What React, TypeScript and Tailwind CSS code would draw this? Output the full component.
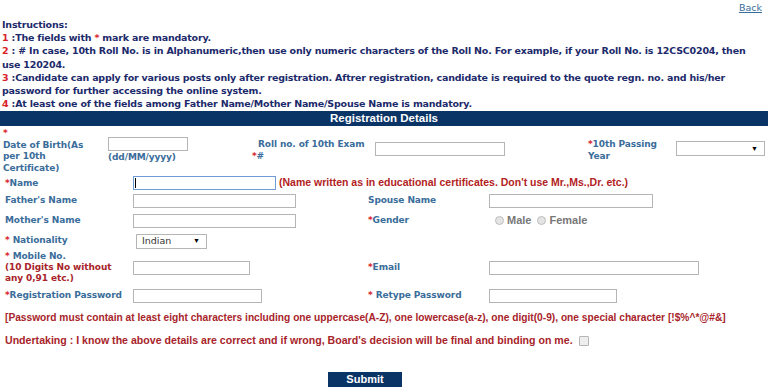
import React from 'react'

const label = "font-['DejaVu_Sans',Verdana,sans-serif] font-bold text-[9px] text-[#3a6d9a] leading-[11.5px] tracking-[-0.1px]"
const star = 'text-[#d9232a]'
const box = 'h-[14px] border border-[#b5b5b5] bg-white'

function Select({ width, value }: { width: string; value?: string }) {
  return (
    <div className={`${width} h-[15px] border border-[#b5b5b5] bg-white flex items-center justify-between pl-[5px] pr-[6px]`}>
      <span className="font-['DejaVu_Sans',Verdana,sans-serif] text-[9.5px] text-[#333]">{value}</span>
      <span className="text-[7px] text-black">▼</span>
    </div>
  )
}

function Radio({ text }: { text: string }) {
  return (
    <span className="flex items-center gap-[3px]">
      <span className="w-[9px] h-[9px] rounded-full border border-[#bdbdbd] bg-[#e4e4e4]" />
      <span className="font-['Liberation_Sans',Arial,sans-serif] font-bold text-[11px] text-[#777]">{text}</span>
    </span>
  )
}

export default function App() {
  return (
    <div className="w-[768px] h-[388px] bg-white overflow-hidden">
      <div className="flex justify-end pr-[6px] h-[18px] pt-[2px]">
        <a className="font-['DejaVu_Sans',Verdana,sans-serif] text-[9.5px] text-[#3a6d9a] underline leading-[12px]">Back</a>
      </div>

      {/* Instructions */}
      <div className="font-['DejaVu_Sans',Verdana,sans-serif] font-bold text-[9.5px] leading-[13.2px] text-[#1c2a6b] pl-[2px] tracking-[-0.2px] whitespace-nowrap">
        <div>Instructions:</div>
        <div><span className={star}>1 </span>:The fields with <span className={star}>*</span> mark are mandatory.</div>
        <div><span className={star}>2 </span>: # In case, 10th Roll No. is in Alphanumeric,then use only numeric characters of the Roll No. For example, if your Roll No. is 12CSC0204, then</div>
        <div>use 120204.</div>
        <div><span className={star}>3 </span>:Candidate can apply for various posts only after registration. Aftrer registration, candidate is required to the quote regn. no. and his/her</div>
        <div>password for further accessing the online system.</div>
        <div><span className={star}>4 </span>:At least one of the fields among Father Name/Mother Name/Spouse Name is mandatory.</div>
      </div>

      <div className="mt-px h-[15px] bg-[#0b3466] flex items-center justify-center font-['Liberation_Sans',Arial,sans-serif] font-bold text-[11.5px] text-white">
        Registration Details
      </div>

      {/* DOB row */}
      <div className="flex pl-[3px] pt-[2px] h-[49px]">
        <div className={`${label} w-[105px]`}>
          <div className={star}>*</div>
          <div>Date of Birth(As<br />per 10th<br />Certificate)</div>
        </div>
        <div className="w-[144px] pt-[9px]">
          <div className={`${box} w-[80px]`} />
          <div className={`${label} mt-px`}>(dd/MM/yyyy)</div>
        </div>
        <div className={`${label} w-[123px] pt-[11px]`}>
          <div className="pl-[6px]">Roll no. of 10th Exam</div>
          <div><span className={star}>*</span>#</div>
        </div>
        <div className="w-[213px] pt-[14px]">
          <div className={`${box} w-[130px]`} />
        </div>
        <div className={`${label} w-[88px] pt-[11px]`}>
          <span className={star}>*</span>10th Passing<br />Year
        </div>
        <div className="pt-[13px]">
          <Select width="w-[89px]" />
        </div>
      </div>

      {/* main grid */}
      <div className="grid grid-cols-[128px_235px_121px_1fr] pl-[5px] items-center">
        <div className={`${label} h-[15px] flex items-center`}><span className={star}>*</span>Name</div>
        <div className="col-span-3 flex items-center gap-[3px]">
          <div className="w-[143px] h-[14px] border border-[#6f9cd6] bg-white flex items-center pl-[1px]">
            <span className="w-px h-[10px] bg-black" />
          </div>
          <span className="font-['Liberation_Sans',Arial,sans-serif] font-bold text-[10.5px] text-[#b22222]">(Name written as in educational certificates. Don't use Mr.,Ms.,Dr. etc.)</span>
        </div>

        <div className={`${label} h-[19px] flex items-center`}>Father's Name</div>
        <div><div className={`${box} w-[163px]`} /></div>
        <div className={label}>Spouse Name</div>
        <div><div className={`${box} w-[164px]`} /></div>

        <div className={`${label} h-[21px] flex items-center`}>Mother's Name</div>
        <div><div className={`${box} w-[163px]`} /></div>
        <div className={label}><span className={star}>*</span>Gender</div>
        <div className="flex items-center gap-[6px] pl-[6px]">
          <Radio text="Male" />
          <Radio text="Female" />
        </div>

        <div className={`${label} h-[20px] flex items-center`}><span className={star}>*&nbsp;</span>Nationality</div>
        <div className="pl-[3px]"><Select width="w-[71px]" value="Indian" /></div>
        <div />
        <div />

        <div className={`${label} h-[33px] leading-[11px] flex flex-col justify-center`}>
          <div><span className={star}>*&nbsp;</span>Mobile No.</div>
          <div className="text-[#a8242a]">(10 Digits No without<br />any 0,91 etc.)</div>
        </div>
        <div><div className={`${box} w-[117px]`} /></div>
        <div className={label}><span className={star}>*</span>Email</div>
        <div><div className={`${box} w-[210px]`} /></div>

        <div className={`${label} h-[23px] flex items-center`}><span className={star}>*</span>Registration Password</div>
        <div><div className={`${box} w-[129px]`} /></div>
        <div className={label}><span className={star}>*&nbsp;</span>Retype Password</div>
        <div><div className={`${box} w-[128px]`} /></div>
      </div>

      <div className="pl-[5px] mt-[5px] font-['Liberation_Sans',Arial,sans-serif] font-bold text-[10.2px] text-[#a8242a] leading-[12px]">
        [Password must contain at least eight characters including one uppercase(A-Z), one lowercase(a-z), one digit(0-9), one special character [!$%^*@#&]
      </div>

      <div className="pl-[5px] mt-[11px] h-[12px] flex items-center gap-[6px] font-['Liberation_Sans',Arial,sans-serif] font-bold text-[10.6px] text-[#a8242a]">
        <span>Undertaking : I know the above details are correct and if wrong, Board's decision will be final and binding on me.</span>
        <span className="w-[10px] h-[10px] border border-[#b5b5b5] bg-[#eee] rounded-[1px]" />
      </div>

      <div className="flex justify-center mt-[25px] pr-[38px]">
        <button className="w-[74px] h-[15px] bg-[#0b3466] font-['Liberation_Sans',Arial,sans-serif] font-bold text-[11px] text-white leading-[15px]">
          Submit
        </button>
      </div>
    </div>
  )
}
